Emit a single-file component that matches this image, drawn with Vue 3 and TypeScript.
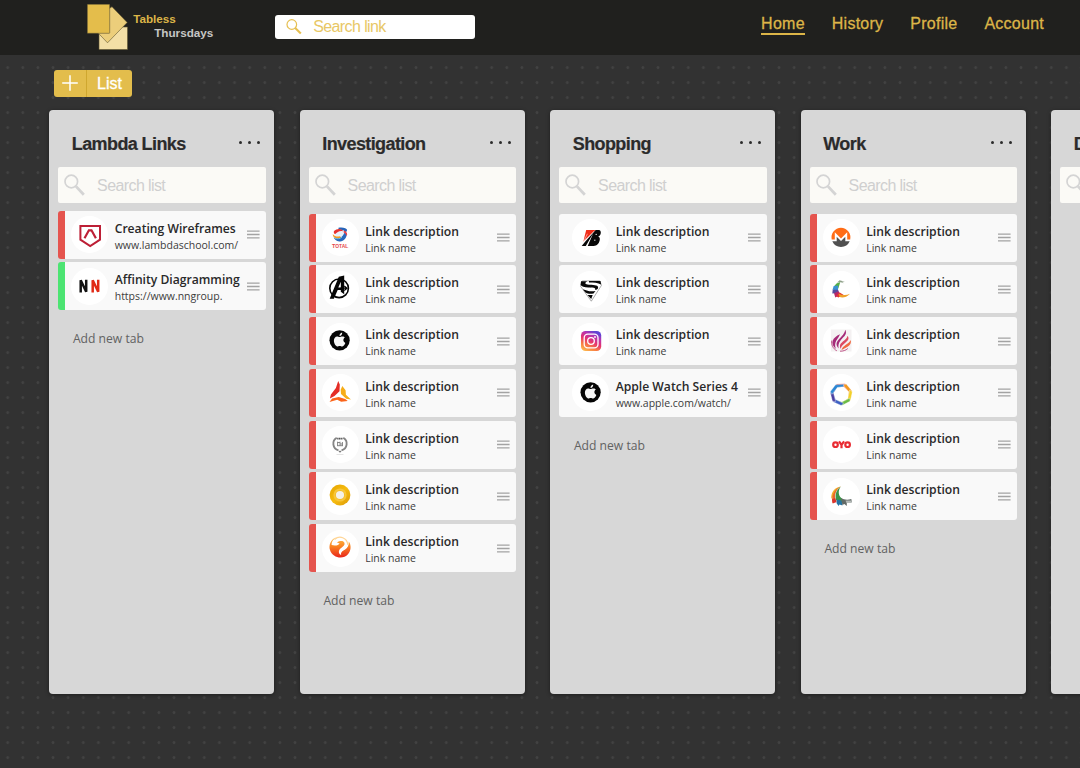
<script setup lang="ts">
interface LinkCard {
  title: string
  name: string
  icon: string
  tag?: 'red' | 'green'
}

interface LinkList {
  title: string
  tight?: boolean
  cards: LinkCard[]
}

const navItems: string[] = ['Home', 'History', 'Profile', 'Account']

const generic = (icon: string, tag?: 'red' | 'green'): LinkCard => ({
  title: 'Link description',
  name: 'Link name',
  icon,
  tag,
})

const lists: LinkList[] = [
  {
    title: 'Lambda Links',
    tight: true,
    cards: [
      { title: 'Creating Wireframes', name: 'www.lambdaschool.com/', icon: 'lambda', tag: 'red' },
      { title: 'Affinity Diagramming', name: 'https://www.nngroup.', icon: 'nn', tag: 'green' },
    ],
  },
  {
    title: 'Investigation',
    cards: ['total', 'avengers', 'apple', 'triad', 'emblem', 'ring', 'phoenix'].map((i) => generic(i, 'red')),
  },
  {
    title: 'Shopping',
    cards: [
      generic('bridge'),
      generic('super'),
      generic('insta'),
      { title: 'Apple Watch Series 4', name: 'www.apple.com/watch/', icon: 'apple' },
    ],
  },
  {
    title: 'Work',
    cards: ['monero', 'crescent', 'flame', 'hexagon', 'oyo', 'swoosh'].map((i) => generic(i, 'red')),
  },
  { title: 'Design', cards: [] },
]

const hexColors: string[] = ['#e8392b', '#f39a1f', '#f2d02a', '#6cbb45', '#3d5fc4', '#4b3f9f', '#2d87d3']
</script>

<template>
  <div class="page">
    <header class="topbar">
      <div class="brand">
        <svg class="logo" width="42" height="48" viewBox="0 0 42 48">
          <path d="M12 23h28.5v22.5H12z" fill="#f3dfa6" stroke="#5f5530" stroke-width=".6" />
          <path d="M23 4l2-1.3L40.2 18.5 20.5 38.8 3.5 21z" fill="#ecce7b" stroke="#5f5530" stroke-width=".6" />
          <rect x=".3" y=".3" width="22.4" height="29" rx=".6" fill="#e4bd4b" stroke="#5f5530" stroke-width=".6" />
        </svg>
        <div class="brand-name">
          <span class="first">Tabless</span>
          <span class="second">Thursdays</span>
        </div>
      </div>
      <label class="search-link">
        <svg width="16" height="16" viewBox="0 0 16 16" fill="none" stroke="#e6bf50">
          <circle cx="5.8" cy="5.5" r="4.8" stroke-width="1.2" />
          <path d="M9.2 9l5.6 5.6" stroke-width="2.1" />
        </svg>
        <span>Search link</span>
      </label>
      <nav class="nav">
        <a v-for="(item, i) in navItems" :key="item" :class="{ active: i === 0 }">{{ item }}</a>
      </nav>
    </header>

    <main class="board">
      <button class="add-list" type="button">
        <span class="plus">
          <svg width="16" height="16" viewBox="0 0 16 16"><path d="M8 .3v15.4M.2 8h15.6" stroke="#fff" stroke-width="1.5" /></svg>
        </span>
        <span class="label">List</span>
      </button>

      <div class="lists">
        <section v-for="list in lists" :key="list.title" class="list" :class="{ tight: list.tight }">
          <div class="list-head">
            <h2>{{ list.title }}</h2>
            <span class="dots"><i></i><i></i><i></i></span>
          </div>
          <div class="search-list">
            <svg width="21" height="22" viewBox="0 0 21 22" fill="none" stroke="#d4d4d4">
              <circle cx="7.3" cy="7.5" r="6.3" stroke-width="1.7" />
              <path d="M12 12.4l7.8 8.4" stroke-width="2.800" />
            </svg>
            <span>Search list</span>
          </div>

          <div class="cards">
            <article v-for="(card, ci) in list.cards" :key="ci" class="card" :class="card.tag">
              <span class="avatar">
                <svg width="36" height="36" viewBox="0 0 36 36">
                  <g v-if="card.icon === 'lambda'">
                    <path d="M8.4 8.9h19.6v13.8l-9.8 6.3-9.8-6.3z" fill="#fff" stroke="#bd1f36" stroke-width="2" />
                    <path d="M12.500 21.200l4.400-7.900h2.600l4.400 7.900" fill="none" stroke="#bd1f36" stroke-width="2.200" />
                  </g>
                  <g v-else-if="card.icon === 'nn'" fill="none" stroke-width="2.5" stroke-linejoin="bevel">
                    <path d="M8.7 24.6V12.2l5.5 11.6V11.8" stroke="#111" />
                    <path d="M20.7 24.6V12.2l5.5 11.6V11.8" stroke="#e02a16" />
                  </g>
                  <g v-else-if="card.icon === 'total'">
                    <circle cx="18" cy="15" r="5" fill="#e8f1fa" />
                    <path d="M16.5 7.8c4.500-1 8 .5 8.700 2.200l-1.500 3c-1-2.700-4-3.800-7.200-3z" fill="#2864b8" />
                    <path d="M12 11c3-3 8-2.700 9.500.5-3.500-1.300-6 .3-8.500 2.700-1.200-.7-1.500-2-1-3.200z" fill="#e7332f" />
                    <path d="M10.800 14c2 2.500 4.500 3 6.700 2.300l3.500 1.500c-4 3.200-10.400.8-10.200-3.800z" fill="#f59b20" />
                    <path d="M11.500 17.500c4 2.500 8 1.500 11-4.700l2.300.3c.5 5-3.800 9-7.500 8.300-3-.4-4.800-2-5.800-3.900z" fill="#2869bd" />
                    <path d="M22 10.500c3 1 3.800 3.500 2.800 5.500-.8-2-1.800-3-3.200-3.500z" fill="#e9454a" />
                    <path d="M12.500 18c2.500 1.200 5.500 1 7.500-.8" fill="none" stroke="#65bce4" />
                    <text x="9.900" y="27.800" font-size="4.500" font-weight="700" fill="#e5484b" textLength="16.400" lengthAdjust="spacingAndGlyphs"><tspan font-size="5">T</tspan>OTAL</text>
                  </g>
                  <g v-else-if="card.icon === 'avengers'">
                    <circle cx="17.100" cy="17.300" r="9.300" fill="none" stroke="#050505" stroke-width="1.600" />
                    <path d="M16.800 5.800l5.400-1.200v18.600l-3.400-2.400v-1.700h-3.100L11.900 27.700H7.700z" fill="#050505" />
                    <path d="M18.800 10.700v5.900h-2.500z" fill="#fff" />
                    <path d="M18.500 17.200h6.300M22.300 15l2.700 2.200-2.700 2.300" stroke="#050505" stroke-width="1.200" fill="none" />
                  </g>
                  <g v-else-if="card.icon === 'apple'">
                    <circle cx="17.600" cy="17.300" r="10.100" fill="#050505" />
                    <path d="M17.500 14.100c.9 0 1.700-.8 3-.7 1 0 1.900.5 2.400 1.200-2.200 1.400-1.900 4.300.4 5.300-.8 2-2 3.500-3.200 3.500-.9 0-1.300-.5-2.400-.5s-1.500.5-2.400.5c-1.600 0-3.500-3.200-3.400-5.900 0-2.400 1.400-4 3.200-4.100 1 0 1.700.7 2.400.7z" fill="#f6f6f6" />
                    <path d="M17.500 13.100c-.1-1.800 1.100-3.200 2.700-3.500.2 1.900-1.100 3.400-2.700 3.500z" fill="#f6f6f6" />
                  </g>
                  <g v-else-if="card.icon === 'triad'">
                    <path d="M16.200 5.900l1.600 3.500-.3 6.900-5 4.800-4.600 2.500 1-4 5-6.500z" fill="#e42d26" />
                    <path d="M20.300 11l3.300 4.300.3 4.500 5 4.600-4.700-.7-5.200-4.700-.3-4.200z" fill="#f6ad18" />
                    <path d="M7.500 27l2.600-3.500 6.600-1.600 6.500 2.100 2.500 2-6.500.8-4-2z" fill="#fb651b" />
                  </g>
                  <g v-else-if="card.icon === 'emblem'" fill="none" stroke="#858585">
                    <path d="M14.700 10.800a6.900 6.900 0 0 0 1.800 12.600M21.300 10.800a6.900 6.900 0 0 1-1.800 12.600" stroke-width="1.900" />
                    <path d="M15.200 11.600h5.600" stroke-width="1.900" stroke="#555" stroke-dasharray="1.300 .4" />
                    <path d="M15.600 14.700v4.300M18 14.700v4.300M20.400 15v4M15 15.500h3M18 17h3M15 18.700h6" stroke-width="1" />
                    <path d="M16.900 24.100l1.100 1.400 1.100-1.400z" fill="#666" stroke="#666" stroke-width=".4" />
                    <path d="M14.500 27.500h7" stroke="#ddd" stroke-width=".8" />
                  </g>
                  <g v-else-if="card.icon === 'ring'">
                    <defs><linearGradient id="ringFill" x2="1" y2="1"><stop stop-color="#e5a400" /><stop offset=".5" stop-color="#f6bc10" /><stop offset="1" stop-color="#dc9a08" /></linearGradient></defs>
                    <circle cx="18" cy="17" r="10.400" fill="url(#ringFill)" />
                    <circle cx="18" cy="17" r="5.600" fill="none" stroke="#f8c63c" stroke-width="2" />
                    <circle cx="18" cy="17" r="4.100" fill="#f4f1ea" />
                  </g>
                  <g v-else-if="card.icon === 'phoenix'">
                    <defs><linearGradient id="phoenixFill" x2="0" y2="1"><stop stop-color="#ffc045" /><stop offset=".45" stop-color="#fa8322" /><stop offset="1" stop-color="#e9251c" /></linearGradient></defs>
                    <path d="M14 7.300C8.800 9.500 6.400 15.500 8 20c2.300 7.600 12.700 10.300 18 4.300 3.200-3.700 3.400-9 .8-12.800.2 4.200-1.200 6.600-4 8.200-2.500 1.400-4.300 2.600-3.600 5.300-3-1.200-3-4.800-.4-6.800 2.800-2 4.400-3.200 3.600-5.400-.8-2.300-4.600-2.300-7.400-.3l2.600.9c-.8 1.900-4.600 2.500-8 1.600-.3-2.900 1.600-5.700 4.400-7.700z" fill="url(#phoenixFill)" />
                    <path d="M12.500 9.500c5-4.500 12.500-2 13.500 5.500" fill="none" stroke="#ffd596" stroke-width="1.300" />
                  </g>
                  <g v-else-if="card.icon === 'bridge'">
                    <path d="M22.600 10h3.400c2.300.2 2.300 3.800.8 5.500-.8.800-1.600 1-1.600 1 2.400.7 1.900 4.200.5 6.400-1.200 2-3 3-5.400 3h-5.600l5.500-12.600L12.800 25.900H8.700l3.600-4.400z" fill="#080808" />
                    <path d="M13.200 10h9.300L10.300 21.800z" fill="#f02c18" />
                    <path d="M14.400 13.800l-3.700 7.700 10.400-10.300" stroke="#fff" stroke-width=".5" fill="none" />
                    <path d="M22.600 14.400h1.200M21.200 20.200h1.200" stroke="#fff" stroke-width="1" />
                  </g>
                  <g v-else-if="card.icon === 'super'">
                    <path d="M9.300 9.900h17.500l1.700 4.400L18.300 30.200 7.500 15.200z" fill="#fff" stroke="#888" stroke-width=".7" />
                    <path d="M8 10.200h6.200c-3 1.700-2.300 3.300 1.800 3.500 6.500.2 9.400.6 9.100 3.100-.2 1.400-1.400 1.900-2.900 2.100.7-2.600-2.400-1.900-6.700-2.300-4.200-.4-7-1.100-7.900-2.900z" fill="#080808" />
                    <path d="M16 10.100h11.500l.6 3.500c-3.200-1.700-7-2-12.100-2zM9.800 18.200l4 1.300c2.900 1.100 6.500.9 8.700.5l-2 2.400c-3.200.7-6.200.2-8-.9zM14.500 24h5.200l-1.500 3.900z" fill="#080808" />
                  </g>
                  <g v-else-if="card.icon === 'insta'">
                    <defs><linearGradient id="instaFill" x1=".1" y1="1" x2=".6" y2="0"><stop stop-color="#fec351" /><stop offset=".3" stop-color="#f87a43" /><stop offset=".55" stop-color="#e43370" /><stop offset=".8" stop-color="#b735b1" /><stop offset="1" stop-color="#6044d4" /></linearGradient></defs>
                    <rect x="8" y="8" width="20.200" height="20" rx="4.600" fill="url(#instaFill)" />
                    <g fill="none" stroke="#fff" stroke-width="1.300">
                      <rect x="11.200" y="11.200" width="13.800" height="13.600" rx="3.600" />
                      <circle cx="18" cy="18" r="3.300" />
                    </g>
                    <circle cx="22" cy="14" r=".9" fill="#fff" />
                  </g>
                  <g v-else-if="card.icon === 'monero'">
                    <path d="M8.700 19.500a9.500 9.500 0 1 1 18.500 0h-3v-7.300L18 18.400l-6.200-6.200v7.300z" fill="#ff6c16" />
                    <path d="M9.300 21.200h4.400v-4.500l4.300 4.200 4.300-4.200v4.500h4.400a9.500 9.500 0 0 1-17.400 0z" fill="#505050" />
                  </g>
                  <g v-else-if="card.icon === 'crescent'">
                    <path d="M13.500 12.500l3.800-1.500-2 6.500-4.500.5.500-3z" fill="#53ad45" />
                    <path d="M10.700 15l4.500-.5-.3 5-5.400-.8z" fill="#3a91d0" />
                    <path d="M9.700 18.700h5.500l.8 3.200-6.700.7z" fill="#564a9d" />
                    <path d="M11 22.200l4.500-2 2.200 3.300-5.400 3z" fill="#b72868" />
                    <path d="M13 25l3.700-3.600 4 2.700-5.400 2.300z" fill="#e5362d" />
                    <path d="M15.500 22.500c4 2.200 8 2 11.500.2-3.600 4-7.400 4.100-10.400 3.400z" fill="#efa12a" />
                    <path d="M16.500 9.200l5.500 1.600-3-.1 2 1.600-4-1.200-3 .7z" fill="#91a28b" />
                  </g>
                  <g v-else-if="card.icon === 'flame'">
                    <rect x="8" y="6.500" width="20.500" height="22" fill="#f4f1f2" />
                    <path d="M22.200 6.800c4 7.200-8.500 8.700-6.500 18.700-6.900-7.800 5.600-10.700 6.500-18.700z" fill="#a52b78" />
                    <path d="M17 11.300c-1.500 4.300-6.800 7.700-4.100 14.700C6.500 20.500 9.500 14.500 17 11.300z" fill="#a52b78" />
                    <path d="M24.500 12.800c4.200 5.700-6.200 7.200-6.600 13.200-3.700-6.800 5.600-7.400 6.600-13.200z" fill="#dc4b62" />
                    <path d="M27.600 17c2 5.200-5.100 8-9.100 10.100 1-4.800 7.500-5.800 9.100-10.100z" fill="#f06a41" />
                    <path d="M8.800 17.500c-.8 4 1 8 5 10.300M17 28.200c3 .1 5.900-.8 7.800-2.700" fill="none" stroke="#b8447c" stroke-width=".9" />
                  </g>
                  <g v-else-if="card.icon === 'hexagon'" transform="translate(18.300 19.200)">
                    <path v-for="(color, k) in hexColors" :key="k" d="M-4.800-10.200L3.800-10.400 9.300-4.300 7.300-2.900 2.800-7.300-6-7.200z" :fill="color" stroke="#fff" stroke-width=".35" :transform="`rotate(${k * 51.43})`" />
                  </g>
                  <g v-else-if="card.icon === 'oyo'" fill="none" stroke="#e92c33" stroke-width="2.200">
                    <circle cx="12.500" cy="17.700" r="2.300" />
                    <path d="M16 14.300l2.500 3.600 2.600-3.600M18.500 17.500v3.800" />
                    <circle cx="24.600" cy="17.700" r="2.300" />
                  </g>
                  <g v-else>
                    <path d="M17.800 8.500c-5.500.6-10 5-9.500 12.500l3.500-5.600c1-3.500 3-5.500 6-6.900z" fill="#f2ad27" />
                    <path d="M17.800 8.500c-4.300 3-7 7.500-5.300 14.500l-3 2-.5-3.300c.5-6.500 3.500-11 8.800-13.200z" fill="#e9692a" />
                    <path d="M17.800 8.500c-3.400 5-2.500 10 2.500 13l-2 4-5.300-3.300c-1.300-6.200.5-10.200 4.800-13.700z" fill="#3c9448" />
                    <path d="M9 21.500l3.200-1.500 1.500 4-4 1.500z" fill="#da342e" />
                    <path d="M14 21.500l4.500 1 1 5-3-1-1 1.500-2-3z" fill="#2473a3" />
                    <path d="M18 20c3.300 2 7 2 10.300 1l.5 3.200-5 .8v3l-2.400-2-2 1z" fill="#626a67" />
                    <path d="M22.500 22.500h6v2.400h-5z" fill="#b6bbb9" />
                  </g>
                </svg>
              </span>
              <span class="text">
                <strong>{{ card.title }}</strong>
                <small>{{ card.name }}</small>
              </span>
              <svg class="grip" width="13" height="9" viewBox="0 0 13 9"><path d="M0 1.200h12.600M0 4.500h12.600M0 7.800h12.600" stroke="#a3a3a3" stroke-width="1.300" /></svg>
            </article>
          </div>
          <div v-if="list.cards.length" class="add-tab">Add new tab</div>
        </section>
      </div>
    </main>
  </div>
</template>

<style>
body {
  margin: 0;
  overflow: hidden;
}
</style>

<style scoped>
* {
  box-sizing: border-box;
}
.page {
  width: 1080px;
  height: 768px;
  overflow: hidden;
  background-color: #323232;
  background-image: radial-gradient(circle, #434343 0, #424242 1px, transparent 1.8px);
  background-size: 15.125px 15px;
  background-position: 0.1px 0.1px;
  font-family: 'Liberation Sans', Arial, sans-serif;
}
.topbar {
  height: 54.500px;
  background: #20201e;
  display: flex;
  align-items: flex-start;
  padding-left: 86.700px;
  padding-right: 36px;
}
.brand {
  display: flex;
  width: 188px;
  padding-top: 4px;
}
.logo {
  flex: none;
}
.brand-name {
  display: flex;
  flex-direction: column;
  margin-left: 4.500px;
  padding-top: 8px;
  font-size: 11.700px;
  font-weight: 700;
  line-height: 14px;
}
.first {
  color: #dcb548;
}
.second {
  color: #c6c6c4;
  padding-left: 21px;
}
.search-link {
  display: flex;
  align-items: center;
  width: 200.500px;
  height: 24px;
  margin-top: 15px;
  padding-left: 11.500px;
  border-radius: 3px;
  background: #fff;
  color: #e8c765;
  font-size: 16px;
  letter-spacing: -0.6px;
}
.search-link span {
  margin-left: 11px;
}
.nav {
  display: flex;
  gap: 27px;
  margin-left: auto;
  padding-top: 14px;
}
.nav a {
  height: 20.500px;
  line-height: 19px;
  font-size: 16px;
  letter-spacing: 0.25px;
  color: #dcb548;
  -webkit-text-stroke: 0.3px #dcb548;
}
.nav a.active {
  border-bottom: 2px solid #dcb548;
}
.board {
  padding: 15px 0 0 49.400px;
}
.add-list {
  display: flex;
  width: 78px;
  height: 27px;
  margin: 0 0 0 4.600px;
  padding: 0;
  border: 0;
  border-radius: 3px;
  background: #e3bd4c;
  color: #fff;
  font: 16px 'Liberation Sans', Arial, sans-serif;
  -webkit-text-stroke: 0.3px #fff;
}
.plus {
  display: flex;
  align-items: center;
  justify-content: center;
  width: 33px;
  height: 27px;
  border-right: 1px solid #cfa72f;
}
.label {
  flex: 1;
  line-height: 28px;
  text-align: center;
}
.lists {
  display: flex;
  gap: 25.500px;
  margin-top: 13.800px;
}
.list {
  flex: none;
  width: 225px;
  height: 583.300px;
  border-radius: 4px;
  background: #d7d7d7;
  box-shadow: 0 1px 4px rgba(0, 0, 0, 0.4);
  padding: 22px 8.800px 0 9px;
}
.list-head {
  display: flex;
  justify-content: space-between;
  height: 34.800px;
  padding: 0 5.500px 0 13.400px;
}
.list h2 {
  margin: 0;
  font-size: 18px;
  line-height: 25.500px;
  letter-spacing: -0.6px;
  color: #2b2b2b;
  -webkit-text-stroke: 0.2px #2b2b2b;
  white-space: nowrap;
}
.dots {
  display: flex;
  gap: 6px;
  padding-top: 8.700px;
}
.dots i {
  width: 3px;
  height: 3px;
  border-radius: 50%;
  background: #2b2b2b;
}
.search-list {
  display: flex;
  align-items: center;
  height: 36.300px;
  padding-left: 5.700px;
  border-radius: 2px;
  background: #fbfaf6;
  color: #cfcfcf;
  font-size: 16px;
  letter-spacing: -0.6px;
}
.search-list span {
  margin-left: 12px;
  padding-top: 1px;
}
.cards {
  display: flex;
  flex-direction: column;
  gap: 3.750px;
  margin-top: 10.300px;
}
.tight .cards {
  margin-top: 7.300px;
}
.card {
  display: flex;
  align-items: center;
  height: 48px;
  padding-right: 6px;
  border-radius: 3px;
  background: #f9f9f9;
  overflow: hidden;
  border-left: 7px solid #f9f9f9;
}
.card.red {
  border-left-color: #e5544e;
}
.card.green {
  border-left-color: #4ce472;
}
.avatar {
  display: flex;
  align-items: center;
  justify-content: center;
  flex: none;
  width: 37px;
  height: 37px;
  margin-left: 6px;
  border-radius: 50%;
  background: #fff;
}
.text {
  display: flex;
  flex-direction: column;
  flex: 1;
  min-width: 0;
  margin-left: 6.300px;
  padding-top: 4px;
  font-family: 'Open Sans', 'Noto Sans', sans-serif;
  white-space: nowrap;
}
.text strong {
  font-size: 12.150px;
  font-weight: 600;
  line-height: 16px;
  color: #292929;
}
.text small {
  font-size: 10.500px;
  line-height: 16px;
  color: #3c3c3c;
}
.grip {
  flex: none;
}
.add-tab {
  margin: 19px 0 0 14.500px;
  font: 12.150px / 20px 'Open Sans', 'Noto Sans', sans-serif;
  color: #626262;
}
</style>
